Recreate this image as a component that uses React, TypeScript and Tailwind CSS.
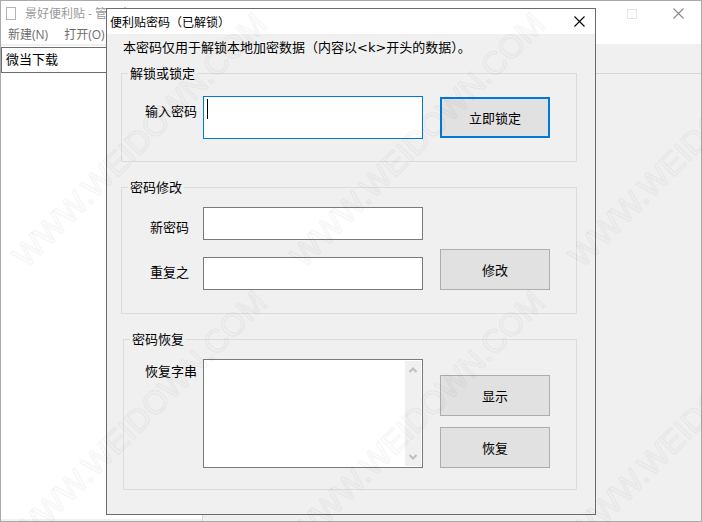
import { useState } from "react";

const UI_FONT = "font-['Open_Sans','Noto_Sans_CJK_SC',sans-serif]";
const DIALOG_FONT = "font-['Noto_Sans_CJK_SC',sans-serif]";

const TILE = 278;
const tiles = [0, 1, 2].flatMap((col) => [0, 1].map((row) => ({ x: 26 + col * TILE, y: 269 + row * TILE })));

function Watermark() {
  return (
    <svg
      className="pointer-events-none absolute inset-0 h-full w-full font-['Liberation_Sans',sans-serif] text-[32px]"
      aria-hidden="true"
    >
      {tiles.map(({ x, y }) => (
        <text
          key={`${x}-${y}`}
          transform={`translate(${x} ${y}) rotate(-45)`}
          fill="#000000"
          fillOpacity="0.01"
          stroke="#000000"
          strokeOpacity="0.045"
          strokeWidth="2"
          strokeLinejoin="round"
        >
          WWW.WEIDOWN.COM
        </text>
      ))}
    </svg>
  );
}

function CloseIcon() {
  return (
    <svg width="11" height="11" viewBox="0 0 11 11" fill="none" stroke="currentColor">
      <path d="M0.5 0.5L10.5 10.5M10.5 0.5L0.5 10.5" strokeWidth="1.1" />
    </svg>
  );
}

function ScrollArrow({ up = false }: { up?: boolean }) {
  return (
    <button
      type="button"
      aria-label={up ? "向上滚动" : "向下滚动"}
      className="flex h-[18px] w-4 items-center justify-center text-[#bfbfbf]"
    >
      <svg width="8" height="6" viewBox="0 0 8 6" fill="none" stroke="currentColor" strokeWidth="2">
        <path d={up ? "M0.5 5L4 1.5L7.5 5" : "M0.5 1L4 4.5L7.5 1"} />
      </svg>
    </button>
  );
}

const buttonClass = "h-[41px] w-[110px] border border-[#adadad] bg-[#e1e1e1]";
const inputClass = "w-full border border-[#7a7a7a] bg-white px-1 outline-none";
const groupClass = "border border-[#dcdcdc]";
const legendClass = "ml-1.5 px-0.5";

function MainWindow() {
  return (
    <div className={`flex min-h-screen flex-col border border-[#aaaaaa] bg-[#f0f0f0] ${UI_FONT}`}>
      <header className="bg-white text-[12px] leading-4 text-[#999999]">
        <div className="flex h-[25px] items-center pl-[5px] pr-[17px]">
          <span className="h-[13px] w-[10px] border border-[#b5b5b5]" />
          <h1 className="ml-[9px] flex-1">景好便利贴 - 管理大厅</h1>
          <button type="button" aria-label="最大化" className="mr-9 h-[10px] w-[10px] border border-[#e5e5e5]" />
          <button type="button" aria-label="关闭" className="text-[#8a8a8a]">
            <CloseIcon />
          </button>
        </div>
        <nav className="flex h-[18px] items-center gap-4 pl-[7px] text-[#6d6d6d]">
          <button type="button">新建(N)</button>
          <button type="button">打开(O)</button>
        </nav>
      </header>
      <div className="flex flex-1 pt-0.5">
        <aside className="mb-0.5 w-[201px] bg-white">
          <input
            aria-label="便利贴"
            defaultValue="微当下载"
            className="h-[26px] w-full border border-[#6e6e6e] bg-white px-1 pb-0.5 text-[13px] outline-none"
          />
        </aside>
        <main className="mt-[27px] flex-1 border-l border-t border-[#d5d5d5]" />
      </div>
    </div>
  );
}

function PasswordDialog() {
  const [password, setPassword] = useState("");

  return (
    <div
      role="dialog"
      aria-labelledby="dialog-title"
      className={`absolute left-[106px] top-2 w-[490px] border border-[#6b6b6b] bg-[#f0f0f0] text-[13px] leading-4 text-black ${DIALOG_FONT}`}
    >
      <div className="flex h-[25px] items-center justify-between bg-white pl-[3px] pr-[10px]">
        <h2 id="dialog-title" className="text-[12px]">
          便利贴密码（已解锁）
        </h2>
        <button type="button" aria-label="关闭">
          <CloseIcon />
        </button>
      </div>

      <form className="flex flex-col gap-[17px] pb-6 pl-3.5 pr-[18px] pt-1.5" onSubmit={(e) => e.preventDefault()}>
        <p className="-mb-[17px] h-[25px] pl-0.5 font-['DejaVu_Sans','Noto_Sans_CJK_SC',sans-serif]">
          本密码仅用于解锁本地加密数据（内容以&lt;k&gt;开头的数据）。
        </p>

        <fieldset className={groupClass}>
          <legend className={legendClass}>解锁或锁定</legend>
          <div className="flex items-start pb-[22px] pl-[23px] pr-[26px] pt-[15px]">
            <label htmlFor="password" className="w-[58px] pt-[7px]">
              输入密码
            </label>
            <div className="relative flex-1">
              <input
                id="password"
                type="password"
                value={password}
                onChange={(e) => setPassword(e.target.value)}
                className="block h-[43px] w-full border border-[#0078d7] bg-white px-1 outline-none"
              />
              {password === "" && <span className="pointer-events-none absolute left-1 top-[3px] h-5 w-px bg-black" />}
            </div>
            <button type="button" className="ml-[17px] mt-px h-[41px] w-[110px] border-2 border-[#0078d7] bg-[#e1e1e1]">
              立即锁定
            </button>
          </div>
        </fieldset>

        <fieldset className={groupClass}>
          <legend className={legendClass}>密码修改</legend>
          <div className="flex items-end pb-[23px] pl-7 pr-[26px] pt-3">
            <div className="flex flex-1 flex-col gap-[17px]">
              <div className="flex items-start">
                <label htmlFor="new-password" className="w-[53px] shrink-0 pt-3">
                  新密码
                </label>
                <input id="new-password" type="password" className={`h-[33px] ${inputClass}`} />
              </div>
              <div className="flex items-start">
                <label htmlFor="repeat-password" className="w-[53px] shrink-0 pt-[7px]">
                  重复之
                </label>
                <input id="repeat-password" type="password" className={`h-[33px] ${inputClass}`} />
              </div>
            </div>
            <button type="button" className={`ml-[17px] ${buttonClass}`}>
              修改
            </button>
          </div>
        </fieldset>

        <fieldset className={`ml-0.5 ${groupClass}`}>
          <legend className={legendClass}>密码恢复</legend>
          <div className="flex pb-[21px] pl-[21px] pr-[26px] pt-3">
            <label htmlFor="recovery" className="w-[58px] pt-1">
              恢复字串
            </label>
            <div className="flex h-[109px] flex-1 border border-[#7a7a7a] bg-white p-px">
              <textarea id="recovery" className="flex-1 resize-none overflow-hidden px-1 outline-none" />
              <div className="flex w-4 flex-col justify-between bg-[#f0f0f0]">
                <ScrollArrow up />
                <ScrollArrow />
              </div>
            </div>
            <div className="ml-[17px] flex flex-col justify-end gap-[11px]">
              <button type="button" className={buttonClass}>
                显示
              </button>
              <button type="button" className={buttonClass}>
                恢复
              </button>
            </div>
          </div>
        </fieldset>
      </form>
    </div>
  );
}

export default function App() {
  return (
    <div className="relative min-h-screen overflow-hidden">
      <MainWindow />
      <PasswordDialog />
      <Watermark />
    </div>
  );
}
